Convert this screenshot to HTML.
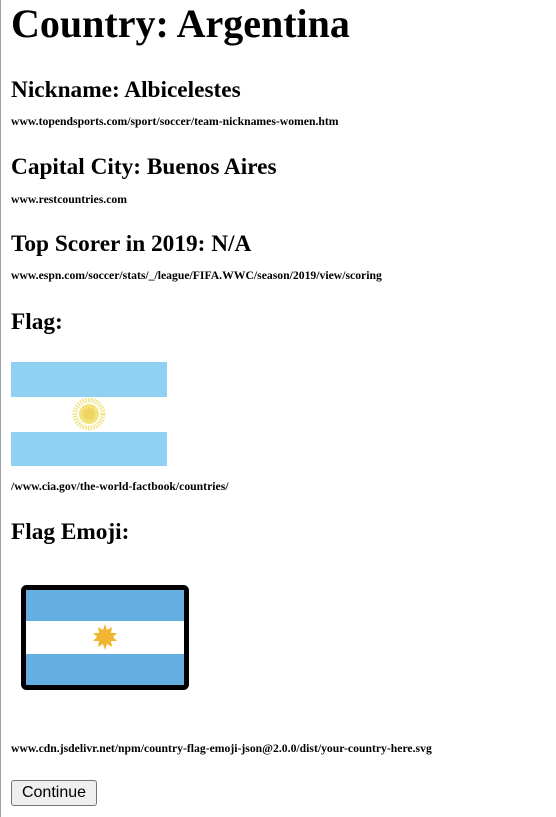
<!DOCTYPE html>
<html><head><meta charset="utf-8"><style>
html,body{margin:0;padding:0;background:#fff;}
body{width:556px;height:817px;position:relative;overflow:hidden;font-family:"Liberation Serif",serif;color:#000;}
.bar{position:absolute;left:0;top:0;width:1px;height:817px;background:#a0a0a0;}
.t{position:absolute;left:11px;margin:0;font-weight:bold;white-space:nowrap;line-height:1;}
h1.t{font-size:40px;top:4px;}
h2.t{font-size:23.3px;}
.s{font-size:11.7px;}
button{position:absolute;left:11px;top:780px;width:86px;height:26px;font-family:"Liberation Sans",sans-serif;font-size:16px;background:#efefef;border:1px solid #767676;border-radius:3px;padding:0;}
</style></head><body>
<div class="bar"></div>
<h1 class="t">Country: Argentina</h1>
<h2 class="t" style="top:79px">Nickname: Albicelestes</h2>
<div class="t s" style="top:116px">www.topendsports.com/sport/soccer/team-nicknames-women.htm</div>
<h2 class="t" style="top:156px">Capital City: Buenos Aires</h2>
<div class="t s" style="top:194px">www.restcountries.com</div>
<h2 class="t" style="top:233px">Top Scorer in 2019: N/A</h2>
<div class="t s" style="top:270px">www.espn.com/soccer/stats/_/league/FIFA.WWC/season/2019/view/scoring</div>
<h2 class="t" style="top:311px">Flag:</h2>
<svg style="position:absolute;left:11px;top:362px" width="156" height="104">
<rect width="156" height="35" fill="#8fd0f3"/><rect y="35" width="156" height="35" fill="#fff"/><rect y="70" width="156" height="34" fill="#8fd0f3"/>
<circle cx="78" cy="52" r="14" fill="none" stroke="#f1e48c" stroke-width="5" stroke-dasharray="1.5 1.2"/>
<circle cx="78" cy="52" r="10" fill="#f3e27a"/><circle cx="78" cy="52" r="6" fill="#eed463"/>
</svg>
<div class="t s" style="top:481px">/www.cia.gov/the-world-factbook/countries/</div>
<h2 class="t" style="top:521px">Flag Emoji:</h2>
<svg style="position:absolute;left:21px;top:585px" width="168" height="105">
<rect x="2.5" y="2.5" width="163" height="100" rx="3" fill="#fff" stroke="#000" stroke-width="5"/>
<rect x="5" y="5" width="158" height="31" fill="#65aee1"/><rect x="5" y="69" width="158" height="31" fill="#65aee1"/>
<polygon fill="#f1b532" points="84,39 86,45 91,42 90,48 96,48 92,52 96,56 90,56 91,62 86,59 84,65 82,59 77,62 78,56 72,56 76,52 72,48 78,48 77,42 82,45"/>
</svg>
<div class="t s" style="top:743px">www.cdn.jsdelivr.net/npm/country-flag-emoji-json@2.0.0/dist/your-country-here.svg</div>
<button>Continue</button>
</body></html>
